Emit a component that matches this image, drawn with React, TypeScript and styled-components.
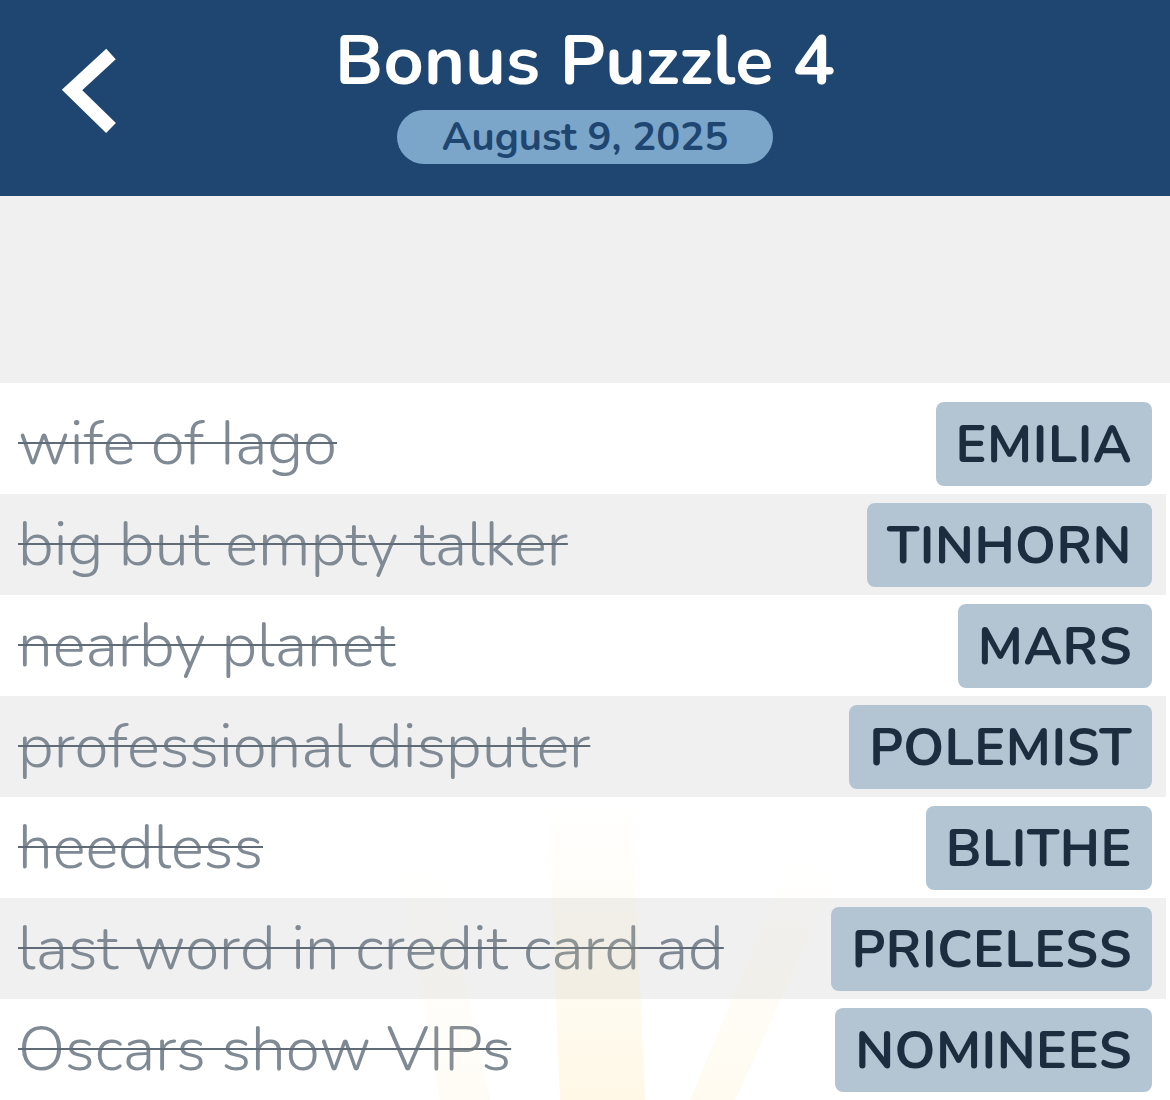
import styled, { createGlobalStyle } from 'styled-components';

const GlobalStyle = createGlobalStyle`
    html, body {
        margin: 0;
        padding: 0;
        background: #ffffff;
        font-family: 'Nunito', 'Lato', 'Noto Sans', sans-serif;
    }
`;

const Page = styled.div`
    width: 1170px;
    height: 1100px;
    overflow: hidden;
    position: relative;
    background: #ffffff;
`;

const Header = styled.header`
    height: 196px;
    background-color: #1f4670;
    display: grid;
    grid-template-columns: 150px 1fr 150px;
    align-items: start;
`;

const BackButton = styled.button`
    background: none;
    border: none;
    padding: 0;
    margin: 46px 0 0 54px;
    width: 70px;
    height: 92px;
    cursor: pointer;
`;

const TitleBlock = styled.div`
    display: flex;
    flex-direction: column;
    align-items: center;
    padding-top: 20px;
`;

const Title = styled.h1`
    margin: 0;
    color: #ffffff;
    font-size: 70px;
    font-weight: 700;
    line-height: 82px;
    letter-spacing: 0.3px;
`;

const DatePill = styled.div`
    margin-top: 8px;
    width: 376px;
    height: 54px;
    border-radius: 27px;
    background-color: #7ba6ca;
    color: #1f4670;
    font-size: 40px;
    font-weight: 700;
    display: flex;
    align-items: center;
    justify-content: center;
`;

const Spacer = styled.div`
    height: 187px;
    background-color: #f0f0f0;
`;

const List = styled.ul`
    list-style: none;
    margin: 0;
    padding: 10px 4px 0 0;
`;

const Row = styled.li<{ shaded: boolean }>`
    height: 101px;
    display: flex;
    align-items: center;
    justify-content: space-between;
    padding: 0 14px 0 18px;
    background-color: ${(props) => (props.shaded ? '#f0f0f0' : '#ffffff')};
    box-sizing: border-box;
`;

const Clue = styled.span`
    color: #7f8a95;
    font-size: 62px;
    font-weight: 300;
    text-decoration: line-through;
    text-decoration-thickness: 2px;
    text-decoration-color: #5f6b77;
    white-space: nowrap;
`;

const Answer = styled.span`
    background-color: #b3c5d2;
    color: #1b2d3f;
    font-size: 52px;
    font-weight: 700;
    height: 84px;
    border-radius: 8px;
    padding: 0 20px;
    display: flex;
    align-items: center;
    letter-spacing: 0.5px;
    margin-top: 1px;
`;

const Rays = styled.svg`
    position: absolute;
    left: 0;
    bottom: 0;
    width: 1170px;
    height: 320px;
    pointer-events: none;
`;

const clues: [string, string][] = [
    ['wife of Iago', 'EMILIA'],
    ['big but empty talker', 'TINHORN'],
    ['nearby planet', 'MARS'],
    ['professional disputer', 'POLEMIST'],
    ['heedless', 'BLITHE'],
    ['last word in credit card ad', 'PRICELESS'],
    ['Oscars show VIPs', 'NOMINEES'],
];

export default function App() {
    return (
        <Page>
            <GlobalStyle />
            <Header>
                <BackButton aria-label="Back">
                    <svg width="70" height="92" viewBox="0 0 70 92">
                        <polyline
                            points="57,8 18,44 57,82"
                            fill="none"
                            stroke="#ffffff"
                            strokeWidth="14"
                            strokeLinejoin="miter"
                            strokeLinecap="butt"
                        />
                    </svg>
                </BackButton>
                <TitleBlock>
                    <Title>Bonus Puzzle 4</Title>
                    <DatePill>August 9, 2025</DatePill>
                </TitleBlock>
                <div />
            </Header>
            <Spacer />
            <List>
                {clues.map(([clue, answer], i) => (
                    <Row key={answer} shaded={i % 2 === 1}>
                        <Clue>{clue}</Clue>
                        <Answer>{answer}</Answer>
                    </Row>
                ))}
            </List>
            <Rays viewBox="0 0 1170 320">
                <defs>
                    <linearGradient id="ray" x1="0" y1="0" x2="0" y2="1">
                        <stop offset="0" stopColor="#ffe9a8" stopOpacity="0" />
                        <stop offset="0.5" stopColor="#ffe29a" stopOpacity="0.12" />
                        <stop offset="1" stopColor="#ffdc85" stopOpacity="0.2" />
                    </linearGradient>
                </defs>
                <polygon points="548,20 632,20 645,320 560,320" fill="url(#ray)" />
                <polygon points="790,80 840,90 735,320 690,320" fill="url(#ray)" opacity="0.6" />
                <polygon points="400,90 440,85 490,320 440,320" fill="url(#ray)" opacity="0.4" />
            </Rays>
        </Page>
    );
}
